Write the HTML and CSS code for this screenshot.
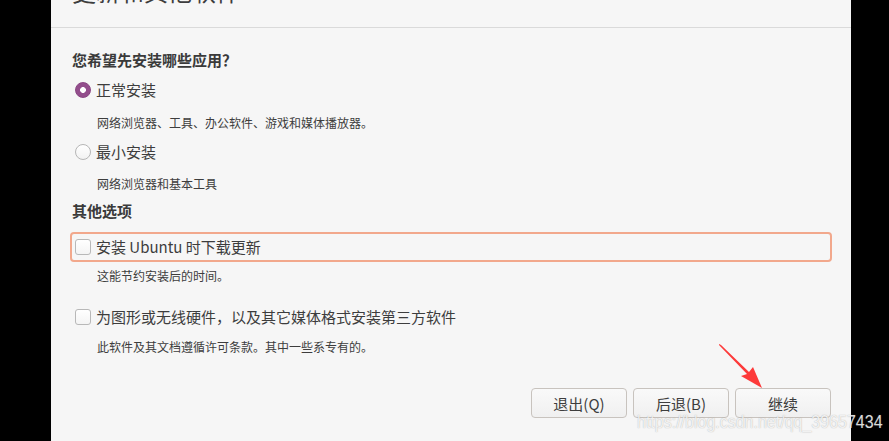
FILE: index.html
```html
<!DOCTYPE html>
<html lang="zh-CN">
<head>
<meta charset="utf-8">
<title>更新和其他软件</title>
<link rel="stylesheet" href="styles.css">
</head>
<body>
<div class="screen">
  <div class="side-left"></div>
  <main class="panel">
    <header class="titlebar"><h1 class="title">更新和其他软件</h1></header>
    <section class="content">
      <h2 class="section-head first">您希望先安装哪些应用？</h2>
      <div class="option radio-row r1">
        <span class="radio checked"></span><span class="label">正常安装</span>
      </div>
      <p class="desc d1">网络浏览器、工具、办公软件、游戏和媒体播放器。</p>
      <div class="option radio-row r2">
        <span class="radio"></span><span class="label">最小安装</span>
      </div>
      <p class="desc d2">网络浏览器和基本工具</p>
      <h2 class="section-head second">其他选项</h2>
      <div class="option check-row focused">
        <span class="checkbox"></span><span class="label">安装 Ubuntu 时下载更新</span>
      </div>
      <p class="desc d3">这能节约安装后的时间。</p>
      <div class="option check-row c2">
        <span class="checkbox"></span><span class="label">为图形或无线硬件，以及其它媒体格式安装第三方软件</span>
      </div>
      <p class="desc d4">此软件及其文档遵循许可条款。其中一些系专有的。</p>
      <div class="buttons">
        <button class="btn">退出(Q)</button>
        <button class="btn">后退(B)</button>
        <button class="btn">继续</button>
      </div>
    </section>
    <svg class="arrow" width="60" height="60" viewBox="0 0 60 60">
      <polygon points="0,0 2,1 30,28 34,23 43,44 22,32 28,30 0,1" fill="#fd3a3a"/>
    </svg>
  </main>
  <div class="side-right"></div>
  <div class="watermark">https://blog.csdn.net/qq_39657434</div>
</div>
</body>
</html>
```

FILE: styles.css
```css
* { box-sizing: border-box; }
html, body { margin: 0; padding: 0; }
body {
  background: #000;
  font-family: "Noto Sans CJK SC", "Noto Sans", sans-serif;
  color: #3d3d3d;
  overflow: hidden;
}
.screen {
  position: relative;
  display: flex;
  width: 889px;
  height: 441px;
}
.side-left { width: 51px; background: #000; }
.side-right { flex: 1; background: #000; }
.panel {
  position: relative;
  width: 800px;
  height: 441px;
  background: #f6f6f6;
  display: flex;
  flex-direction: column;
}
.titlebar {
  height: 28px;
  border-bottom: 1px solid #dadada;
  overflow: hidden;
  padding-left: 21px;
}
.title {
  margin: -21px 0 0 0;
  font-size: 24px;
  line-height: 24px;
  font-weight: normal;
  color: #3d3d3d;
}
.content {
  display: flex;
  flex-direction: column;
  padding: 0 19px 0 21px;
}
.section-head {
  margin: 0;
  font-size: 15px;
  line-height: 20px;
  font-weight: bold;
  color: #3a3a3a;
}
.section-head.first { margin-top: 22px; }
.section-head.second { margin-top: 9px; }
.option {
  display: flex;
  align-items: center;
  font-size: 15px;
}
.label { line-height: 20px; }
.radio-row { height: 20px; padding-left: 3px; }
.r1 { margin-top: 10px; }
.r2 { margin-top: 11px; }
.radio {
  width: 16px;
  height: 16px;
  border-radius: 50%;
  border: 1px solid #b6b6b6;
  background: linear-gradient(#ffffff, #f2f2f2);
  margin-right: 5px;
  flex: none;
}
.radio.checked {
  border-color: #8a4583;
  background: radial-gradient(circle, #ffffff 0 2.6px, #934e8c 3.2px);
}
.desc {
  margin: 0;
  padding-left: 25px;
  font-size: 12px;
  line-height: 16px;
  color: #3d3d3d;
}
.d1 { margin-top: 15px; }
.d2 { margin-top: 14px; }
.d3 { margin-top: 6px; }
.d4 { margin-top: 7px; }
.check-row {
  height: 30px;
  padding-left: 3px;
  margin-left: -2px;
  border: 2px solid transparent;
  border-radius: 4px;
}
.check-row.focused {
  margin-top: 11px;
  border-color: #f2a88c;
}
.check-row.c2 { margin-top: 18px; }
.checkbox {
  width: 16px;
  height: 16px;
  border: 1px solid #b8b8b8;
  border-radius: 3px;
  background: linear-gradient(#ffffff, #f4f4f4);
  margin-right: 5px;
  flex: none;
}
.buttons {
  display: flex;
  justify-content: flex-end;
  gap: 6px;
  margin-top: 33px;
  margin-right: 1px;
}
.btn {
  width: 96px;
  height: 30px;
  border: 1px solid #c8c3be;
  border-radius: 4px;
  background: linear-gradient(#f9f9f9, #f0f0f0);
  font-family: "Noto Sans CJK SC", "Noto Sans", sans-serif;
  font-size: 15px;
  color: #3d3d3d;
  padding: 0;
}
.arrow {
  position: absolute;
  left: 668px;
  top: 344px;
}
.watermark {
  position: absolute;
  left: 637px;
  top: 411px;
  font-family: "Liberation Sans", Arial, sans-serif;
  font-size: 16px;
  line-height: 20px;
  transform: scaleY(1.15);
  transform-origin: left top;
  color: rgba(255, 255, 255, 0.82);
  text-shadow: 0 0 1px rgba(120, 120, 120, 0.6);
  white-space: nowrap;
}
```
